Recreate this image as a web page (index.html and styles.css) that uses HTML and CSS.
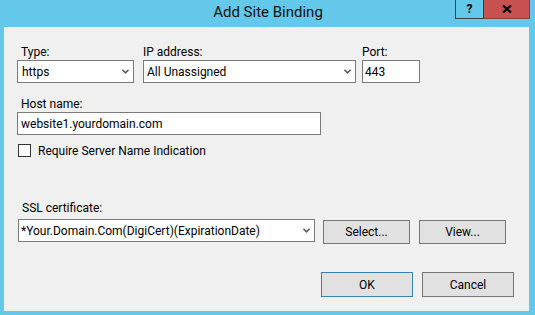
FILE: index.html
```html
<!doctype html>
<html lang="en">
  <head>
    <meta charset="UTF-8">
    <meta name="viewport" content="width=device-width, initial-scale=1.0">
    <title>Add Site Binding</title>
    <link rel="stylesheet" href="styles.css">
  </head>
  <body>
    <div class="window">
      <!-- Title bar -->
      <div class="titlebar">
        <span class="title">Add Site Binding</span>
        <div class="caption-buttons">
          <span class="cap-btn help">?</span>
          <span class="cap-btn close">
            <svg width="10" height="8" viewBox="0 0 10 8">
              <path d="M1 0.5 L9 7.5 M9 0.5 L1 7.5" stroke="#000" stroke-width="2.2" fill="none"/>
            </svg>
          </span>
        </div>
      </div>
      <!-- Dialog body -->
      <div class="client">
        <div class="row">
          <div class="field type">
            <label class="label indent">Type:</label>
            <div class="combo pad4">
              <span>https</span>
              <svg class="chevron" width="7" height="5" viewBox="0 0 7 5"><path d="M0.5 0.8 L3.5 3.8 L6.5 0.8" stroke="#5f5f5f" stroke-width="1.6" fill="none"/></svg>
            </div>
          </div>
          <div class="field ip">
            <label class="label">IP address:</label>
            <div class="combo">
              <span>All Unassigned</span>
              <svg class="chevron" width="7" height="5" viewBox="0 0 7 5"><path d="M0.5 0.8 L3.5 3.8 L6.5 0.8" stroke="#5f5f5f" stroke-width="1.6" fill="none"/></svg>
            </div>
          </div>
          <div class="field port">
            <label class="label">Port:</label>
            <div class="textbox pad2">443</div>
          </div>
        </div>

        <div class="field host">
          <label class="label indent">Host name:</label>
          <div class="textbox">website1.yourdomain.com</div>
        </div>

        <div class="check-row">
          <span class="checkbox"></span>
          <span>Require Server Name Indication</span>
        </div>

        <div class="field ssl">
          <label class="label indent ssl-label">SSL certificate:</label>
          <div class="ssl-row">
            <div class="combo pad2 ssl-combo">
              <span>*Your.Domain.Com(DigiCert)(ExpirationDate)</span>
              <svg class="chevron" width="7" height="5" viewBox="0 0 7 5"><path d="M0.5 0.8 L3.5 3.8 L6.5 0.8" stroke="#5f5f5f" stroke-width="1.6" fill="none"/></svg>
            </div>
            <button class="btn small">Select...</button>
            <button class="btn small">View...</button>
          </div>
        </div>

        <div class="actions">
          <button class="btn default">OK</button>
          <button class="btn">Cancel</button>
        </div>
      </div>
    </div>
  </body>
</html>
```
FILE: styles.css
```css
body {
  margin: 0;
  font-family: Roboto, "Liberation Sans", sans-serif;
  font-size: 12px;
  color: #000;
}
.window {
  width: 535px;
  height: 315px;
  background: #63c8e9;
  display: flex;
  flex-direction: column;
}
/* Title bar */
.titlebar {
  position: relative;
  height: 27px;
  flex: none;
  display: flex;
  justify-content: center;
  padding-top: 3px;
  box-sizing: border-box;
}
.title {
  font-size: 15px;
  line-height: 18px;
  color: #111;
  padding-left: 1px;
}
.caption-buttons {
  position: absolute;
  top: 0;
  right: 5px;
  display: flex;
}
.cap-btn {
  height: 19px;
  box-sizing: border-box;
  display: flex;
  align-items: center;
  justify-content: center;
  border: 1px solid #3d3d3d;
  border-top: none;
}
.cap-btn.help {
  width: 29px;
  font-weight: bold;
  font-size: 12px;
  padding-bottom: 1px;
}
.cap-btn.close {
  width: 46px;
  background: #c75050;
  border-left: none;
  border-color: #8c3b3b;
}
/* Client area */
.client {
  flex: 1;
  margin: 0 6px 4px 4px;
  background: #f0f0f0;
  padding: 17px 0 0 13px;
  display: flex;
  flex-direction: column;
}
.row {
  display: flex;
}
.field {
  display: flex;
  flex-direction: column;
}
.label {
  line-height: 16px;
}
.label.indent {
  margin-left: 4px;
}
.field.type { width: 117px; margin-right: 9px; }
.field.ip { width: 213px; margin-right: 6px; }
.field.port { width: 58px; }
.combo, .textbox {
  height: 23px;
  box-sizing: border-box;
  border: 1px solid #7a7a7a;
  background: #fff;
  display: flex;
  align-items: center;
  padding-left: 3px;
  white-space: nowrap;
  overflow: hidden;
}
.combo {
  justify-content: space-between;
  padding-right: 4px;
}
.pad4 { padding-left: 4px; }
.pad2 { padding-left: 2px; }
.chevron {
  flex: none;
}
.field.host {
  margin-top: 13px;
  width: 304px;
}
.check-row {
  display: flex;
  align-items: center;
  gap: 7px;
  height: 13px;
  margin-top: 9px;
  margin-left: 1px;
}
.checkbox {
  width: 13px;
  height: 13px;
  box-sizing: border-box;
  border: 1px solid #333;
  background: #fff;
}
.field.ssl {
  margin-top: 43px;
  margin-left: 1px;
}
.ssl-label {
  margin-left: 3px;
  margin-bottom: 3px;
}
.ssl-row {
  display: flex;
  align-items: flex-start;
}
.ssl-combo {
  width: 297px;
  margin-right: 8px;
}
.btn {
  font-family: inherit;
  font-size: 12px;
  color: #000;
  background: #e1e1e1;
  border: 1px solid #767676;
  border-radius: 0;
  width: 92px;
  height: 25px;
  padding: 0;
  margin: 0;
}
.btn.small {
  width: 87px;
  height: 24px;
  margin-top: 1px;
  margin-right: 9px;
}
.btn.default {
  border-color: #3c7fb1;
}
.actions {
  display: flex;
  justify-content: flex-end;
  gap: 9px;
  margin-top: 28px;
  padding-right: 15px;
}
```
